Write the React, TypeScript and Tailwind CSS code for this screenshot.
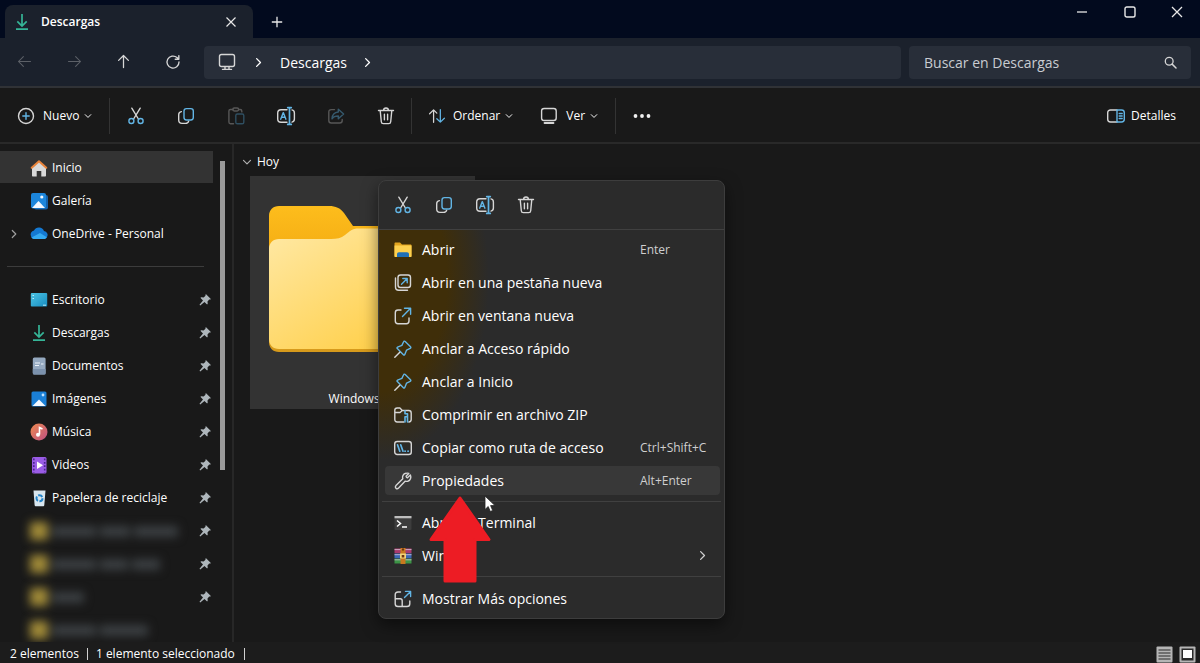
import React from 'react';

type IconProps = { className?: string };

const LIGHT = '#d6d6d6';
const BLUE = '#62b5e5';

/* ---------- line icons ---------- */

function Line({ className = 'size-4', children }: IconProps & { children: React.ReactNode }) {
  return (
    <svg
      viewBox="0 0 20 20"
      className={className}
      fill="none"
      stroke={LIGHT}
      strokeWidth="1.4"
      strokeLinecap="round"
      strokeLinejoin="round"
      aria-hidden="true"
    >
      {children}
    </svg>
  );
}

function CutIcon({ className = 'size-5' }: IconProps) {
  return (
    <Line className={className}>
      <path d="M5.8 2.2 12.4 13M14.2 2.2 7.6 13" />
      <circle cx="5.4" cy="15" r="2.5" stroke={BLUE} />
      <circle cx="14.6" cy="15" r="2.5" stroke={BLUE} />
    </Line>
  );
}

function CopyIcon({ className = 'size-5' }: IconProps) {
  return (
    <Line className={className}>
      <path d="M5.4 5.6C3.6 5.9 2.7 7 2.7 8.7V14c0 2 1.3 3.4 3.3 3.4h3.5c1.8 0 2.800-.8 3.200-2.300" />
      <rect x="8" y="2.6" width="9.3" height="11.4" rx="2.4" stroke={BLUE} />
    </Line>
  );
}

function PasteIcon({ className = 'size-5' }: IconProps) {
  return (
    <Line className={className}>
      <g stroke="#575757">
        <path d="M7 3.5H4.5c-1 0-1.6.6-1.6 1.6v11c0 1 .6 1.6 1.6 1.6h3M13 3.5h1.2c1 0 1.6.6 1.6 1.6v.8" />
        <rect x="6.8" y="2" width="5.800" height="3" rx="1.4" />
      </g>
      <rect x="9.8" y="8" width="8" height="9.8" rx="1.6" stroke="#2f4f61" />
    </Line>
  );
}

function RenameIcon({ className = 'size-5' }: IconProps) {
  return (
    <Line className={className}>
      <path d="M11 3.8H5C3 3.8 1.700 5.100 1.700 7v6c0 2 1.300 3.200 3.300 3.200h6M16 3.900c1.500.3 2.400 1.400 2.400 3.100v6c0 1.700-.9 2.800-2.400 3.100" />
      <path d="M13.500 2v16M11.700 1.600h3.600M11.700 18.400h3.600" stroke={BLUE} strokeWidth="1.7" />
      <path d="m4.700 13.200 2.600-6.600 2.600 6.600M5.600 11.200H9" stroke={BLUE} />
    </Line>
  );
}

function ShareIcon({ className = 'size-5' }: IconProps) {
  return (
    <Line className={className}>
      <path d="M8.500 3.600H5.300c-1.600 0-2.500.9-2.500 2.500v8.400c0 1.600.9 2.500 2.500 2.500h8.400c1.600 0 2.500-.9 2.500-2.500v-1" stroke="#575757" />
      <path d="M12.300 3.200 17.600 8l-5.300 4.800V10c-3.200 0-5 .7-6.300 2.800.2-3.900 2.500-6.500 6.300-6.800z" stroke="#35596d" />
    </Line>
  );
}

function TrashIcon({ className = 'size-5' }: IconProps) {
  return (
    <Line className={className}>
      <path d="M2.500 4.500h15M4.200 4.500l1.100 11.200c.1 1.300.8 1.900 2 1.900h5.400c1.200 0 1.900-.6 2-1.900l1.100-11.200M7.600 4.300C7.600 2.800 8.400 2 10 2s2.400.8 2.400 2.300M8.400 8.300v5.400M11.600 8.300v5.400" />
    </Line>
  );
}

function SortIcon() {
  return (
    <Line className="size-[18px]">
      <path d="M6.200 17V3.200M1.800 7.500l4.400-4.300 3.600 3.600" />
      <path d="M13.700 3v13.800M9.800 13l3.900 3.800 4.500-4.300" stroke={BLUE} />
    </Line>
  );
}

function ViewIcon() {
  return (
    <Line className="size-5">
      <rect x="2.600" y="2.500" width="14.600" height="12" rx="2.500" />
      <path d="M5.500 17h9" strokeWidth="1.800" />
    </Line>
  );
}

function DetailsIcon() {
  return (
    <Line className="size-5">
      <path d="M11 4H4.500C2.800 4 1.700 5 1.700 6.700v6.600c0 1.700 1.100 2.700 2.800 2.700H11" />
      <path d="M11 4h4.500c1.700 0 2.800 1 2.800 2.700v6.600c0 1.700-1.100 2.700-2.800 2.700H11zM13.200 7.500h3M13.200 10h3M13.200 12.500h3" stroke={BLUE} />
    </Line>
  );
}

function PlusCircleIcon() {
  return (
    <Line className="size-5">
      <circle cx="10" cy="10" r="7.500" />
      <path d="M10 6.800v6.400M6.800 10h6.400" stroke={BLUE} />
    </Line>
  );
}

function ChevronIcon({ className = 'size-2' }: IconProps) {
  return (
    <svg viewBox="0 0 10 10" className={className} fill="none" stroke="currentColor" strokeWidth="1.200" strokeLinecap="round" strokeLinejoin="round" aria-hidden="true">
      <path d="m1.500 3.300 3.500 3.500 3.500-3.500" />
    </svg>
  );
}

function MonitorIcon() {
  return (
    <Line className="size-5">
      <rect x="2.500" y="2.500" width="15" height="12" rx="2" />
      <path d="M8 14.600v2.600M12 14.600v2.600M5.500 17.400h9" />
    </Line>
  );
}

function NewTabIcon() {
  return (
    <Line className="size-5">
      <rect x="5" y="2" width="12.500" height="12.500" rx="2.500" />
      <path d="M2.500 5v9c0 2 1.200 3.200 3.200 3.200h8.800" />
      <path d="M8.500 11.200 14 5.800M9.800 5.500h4.400v4.300" stroke={BLUE} />
    </Line>
  );
}

function NewWindowIcon() {
  return (
    <Line className="size-5">
      <path d="M8 4H5C3.300 4 2.300 5 2.300 6.700V15c0 1.700 1 2.700 2.700 2.700h8.300c1.700 0 2.700-1 2.700-2.700v-3" />
      <path d="M9.500 10.500 17.300 2.600M11.500 2.300h6.100v6" stroke={BLUE} />
    </Line>
  );
}

function PinLineIcon() {
  return (
    <Line className="size-5">
      <path d="m12.200 2.500 5.300 5.300c.6.600.4 1.300-.3 1.600l-3.600 1.700-1.800 4.300c-.3.700-.9.800-1.400.3L4.300 9.600c-.5-.5-.4-1.100.3-1.400l4.300-1.800 1.700-3.600c.3-.7 1-.9 1.600-.3z" stroke={BLUE} />
      <path d="m6.800 13.200-5 5" />
    </Line>
  );
}

function ZipIcon() {
  return (
    <Line className="size-5">
      <path d="M11 17H4.200c-1.500 0-2.400-.9-2.400-2.400V5.400C1.800 3.900 2.700 3 4.200 3h2.700l2.400 2.500h6.500c1.500 0 2.400.9 2.400 2.400v6.700c0 1.500-.9 2.400-2.400 2.400M2 7.500h5l2.300-2" />
      <path d="M12 5.800v3h2.500v3H12V17M14.500 11.800V17" stroke={BLUE} strokeWidth="1.600" />
    </Line>
  );
}

function PathIcon() {
  return (
    <Line className="size-5">
      <rect x="1.700" y="3.500" width="16.600" height="13" rx="2.500" />
      <path d="m4.500 6.800 2.300 6.400M7.700 6.800l2.300 6.400M12 13.200h.2M15 13.200h.2" stroke={BLUE} strokeWidth="1.700" />
    </Line>
  );
}

function WrenchIcon() {
  return (
    <Line className="size-5">
      <path d="M12.900 2.300c1-.3 2-.2 2.900.1l-2.600 2.700c-.5.500.9 2 1.500 1.500l2.700-2.600c1 2.300.1 5.500-2.600 6.200-.9.200-1.700.2-2.500-.1l-6.700 7c-1.900 1.800-4.400-.7-2.600-2.600l6.800-6.800c-.9-2.300.5-4.800 3.100-5.400z" />
    </Line>
  );
}

function MoreOptionsIcon() {
  return (
    <Line className="size-5">
      <path d="M7.500 3H5C3.200 3 2.200 4 2.200 5.800v8.900c0 1.800 1 2.800 2.800 2.800h9c1.800 0 2.800-1 2.800-2.800V12M2.400 9.800h4.800c1.200 0 2 .8 2 2v5.500" />
      <path d="m11.500 8.500 5.800-5.800M12.500 2.400h5.100v5.200" stroke={BLUE} />
    </Line>
  );
}

/* ---------- coloured icons ---------- */

function DownloadIcon({ className = 'size-[18px]' }: IconProps) {
  return (
    <svg viewBox="0 0 18 18" className={className} fill="none" stroke="#35b597" strokeWidth="1.700" aria-hidden="true">
      <path d="M9 1v12M4.300 8.300 9 13l4.700-4.700M3 16.200h12" />
    </svg>
  );
}

function HomeIcon() {
  return (
    <svg viewBox="0 0 18 18" className="size-[18px]" aria-hidden="true">
      <path d="M2 8 9 2.500 16 8v8.500c0 .6-.4 1-1 1h-3.700v-5.500H6.700v5.500H3c-.6 0-1-.4-1-1z" fill="#d9d9d9" />
      <path d="M1.700 8.800 9 2.200l7.300 6.600" fill="none" stroke="#e8833a" strokeWidth="2" strokeLinecap="round" strokeLinejoin="round" />
    </svg>
  );
}

function GalleryIcon() {
  return (
    <svg viewBox="0 0 18 18" className="size-[18px]" aria-hidden="true">
      <rect x="4" y="3" width="14" height="14.500" rx="2" fill="#1462ad" />
      <rect x="1" y="1" width="15" height="15.500" rx="2" fill="#1c86dc" />
      <path d="m2 16 6.500-7 6.500 7z" fill="#f2f8ff" />
      <circle cx="11.800" cy="5" r="1.600" fill="#f2f8ff" />
    </svg>
  );
}

function OneDriveIcon() {
  return (
    <svg viewBox="0 0 18 18" className="size-[18px]" aria-hidden="true">
      <path d="M1 11a4 4 0 0 1 3-5.500A5.500 5.500 0 0 1 14 6a4 4 0 0 1 2.600 6.600C16 13.500 15 14 14 14H4.500C2.800 14 1 12.800 1 11z" fill="#1479d2" />
      <path d="M1.500 12.500 10 8l6.800 4.200C16.300 13.400 15.200 14 14 14H4.500c-1.300 0-2.500-.6-3-1.500z" fill="#35aaf2" />
    </svg>
  );
}

function DesktopIcon() {
  return (
    <svg viewBox="0 0 18 18" className="size-[18px]" aria-hidden="true">
      <defs>
        <linearGradient id="desk" x1="0" y1="0" x2="1" y2="1">
          <stop offset="0" stopColor="#4cc4e4" />
          <stop offset="1" stopColor="#178cc0" />
        </linearGradient>
      </defs>
      <rect x=".8" y="2" width="16.400" height="13.500" rx="1" fill="url(#desk)" />
      <path d="M2.500 4.500H4M2.500 7.500H4M13 14.200h3" stroke="#b8ecfa" />
    </svg>
  );
}

function DocumentIcon() {
  return (
    <svg viewBox="0 0 18 18" className="size-[18px]" aria-hidden="true">
      <rect x="2.800" y=".5" width="12.800" height="17" rx="1.500" fill="#95a9c0" />
      <path d="M2.800 12h12.800v4a1.500 1.500 0 0 1-1.500 1.500H4.300A1.500 1.500 0 0 1 2.800 16z" fill="#7b91ac" />
      <path d="M5 6h5M5 8.500h4M11 7h2.500" stroke="#edf3fa" strokeWidth="1.200" />
    </svg>
  );
}

function PictureIcon() {
  return (
    <svg viewBox="0 0 18 18" className="size-[18px]" aria-hidden="true">
      <rect x="1.500" y="1.500" width="15" height="15" rx="1.500" fill="#1a7fd6" />
      <path d="m2.500 16 6.500-6.500 6.500 6.500z" fill="#f2f8ff" />
      <circle cx="13" cy="5" r="1.400" fill="#bfe2ff" />
    </svg>
  );
}

function MusicIcon() {
  return (
    <svg viewBox="0 0 18 18" className="size-[18px]" aria-hidden="true">
      <defs>
        <linearGradient id="music" x1="0" y1="0" x2="1" y2="1">
          <stop offset="0" stopColor="#ee8a50" />
          <stop offset="1" stopColor="#bd4f83" />
        </linearGradient>
      </defs>
      <circle cx="9" cy="9" r="8.500" fill="url(#music)" />
      <path d="M9.500 11.500V4.500l3 1.500" fill="none" stroke="#fff" strokeWidth="1.600" />
      <circle cx="8" cy="11.700" r="2" fill="#fff" />
    </svg>
  );
}

function VideoIcon() {
  return (
    <svg viewBox="0 0 18 18" className="size-[18px]" aria-hidden="true">
      <rect x="2" y="1" width="14.500" height="16.500" rx="1.500" fill="#9a5ce6" />
      <path d="M3.800 2.500v14M14.700 2.500v14" stroke="#4d2493" strokeWidth="1.600" strokeDasharray="1.800 1.600" />
      <path d="m7 5.500 6 3.700-6 3.700z" fill="#fff" />
    </svg>
  );
}

function RecycleIcon() {
  return (
    <svg viewBox="0 0 18 18" className="size-[18px]" aria-hidden="true">
      <path d="M3.500 1.500h12L14.300 16c0 .8-.6 1.300-1.300 1.300H6c-.8 0-1.300-.5-1.400-1.300z" fill="#d8e6ee" />
      <circle cx="9.500" cy="9.200" r="3" fill="none" stroke="#2384c9" strokeWidth="2" strokeDasharray="4.700 1.500" />
    </svg>
  );
}

function PinSolidIcon() {
  return (
    <svg viewBox="0 0 12 12" className="size-3" fill="#aeb6bb" aria-hidden="true">
      <path d="M7.300.4 11.600 4.700c.3.500 0 .9-.5.9l-.9-.1-1.700 1.900.2 2.400c0 .5-.5.7-.9.400L5.500 8 1.200 11.500.5 10.800 4 6.500 1.800 4.200c-.3-.4-.1-.9.400-.9l2.400.2L6.500 1.800l-.1-.9c0-.5.5-.8.9-.5z" />
    </svg>
  );
}

function ExplorerIcon() {
  return (
    <svg viewBox="0 0 20 20" className="size-5" aria-hidden="true">
      <path d="M1.500 3.500c0-.7.4-1 1-1h4.500l2 2h8.500c.7 0 1 .4 1 1V16h-17z" fill="#e3a51f" />
      <path d="M1.500 5.500h17V17h-17z" fill="#fcd04f" />
      <path d="M4 17v-2.800c0-1.200.8-2 2-2h8c1.200 0 2 .8 2 2V17z" fill="#1d6fb8" />
    </svg>
  );
}

function TerminalIcon() {
  return (
    <svg viewBox="0 0 20 20" className="size-5" aria-hidden="true">
      <rect x="1.500" y="3" width="17" height="14" rx="1" fill="#3d3d3d" />
      <path d="M1.500 3h17v2.300h-17z" fill="#bdbdbd" />
      <path d="m4 7.500 3.500 3L4 13.500M9 14h5" fill="none" stroke="#fff" strokeWidth="1.500" />
    </svg>
  );
}

function WinrarIcon() {
  return (
    <svg viewBox="0 0 20 20" className="size-5" aria-hidden="true">
      <path d="M1.500 2.500h17v4.800h-17z" fill="#a83a6e" />
      <path d="M1.500 7.600h17v4.800h-17z" fill="#3a66b5" />
      <path d="M1.500 12.700h17v4.800h-17z" fill="#3c9446" />
      <path d="M1.500 3.600h17M1.500 8.700h17M1.500 13.800h17" stroke="#d7c4d4" strokeWidth=".8" />
      <path d="M7.500 2h5v16h-5z" fill="#c8791f" />
      <path d="M7 7.500h6v5H7z" fill="#f3d478" />
      <path d="M8.700 9h2.600v2.500H8.700zM9 2.500h2v2H9z" fill="#6c3511" />
    </svg>
  );
}

function BigFolder() {
  return (
    <svg viewBox="0 0 187 146" className="w-[187px]" aria-hidden="true">
      <defs>
        <linearGradient id="back" x1="0" y1="0" x2="0" y2="1">
          <stop offset="0" stopColor="#fdbd1c" />
          <stop offset=".4" stopColor="#f2a912" />
          <stop offset="1" stopColor="#d69a1c" />
        </linearGradient>
        <linearGradient id="front" x1="0" y1="0" x2="1" y2="1">
          <stop offset="0" stopColor="#ffe9a6" />
          <stop offset="1" stopColor="#ffc933" />
        </linearGradient>
      </defs>
      <path d="M0 10C0 4 4 0 10 0h50c7 0 11 2 15 7l9 13h93c6 0 10 4 10 10v106c0 6-4 10-10 10H10c-6 0-10-4-10-10z" fill="url(#back)" />
      <path d="M0 43c0-6 4-10 10-10h52c6 0 10-1 14-4l5-4c3-2 5-2.500 9-2.500h87c6 0 10 4 10 10V133c0 6-4 10-10 10H10c-6 0-10-4-10-10z" fill="url(#front)" />
    </svg>
  );
}

/* ---------- sidebar ---------- */

const topLinks = [
  { label: 'Inicio', icon: <HomeIcon />, active: true },
  { label: 'Galería', icon: <GalleryIcon /> },
  { label: 'OneDrive - Personal', icon: <OneDriveIcon />, expandable: true },
];

const pinned = [
  { label: 'Escritorio', icon: <DesktopIcon /> },
  { label: 'Descargas', icon: <DownloadIcon /> },
  { label: 'Documentos', icon: <DocumentIcon /> },
  { label: 'Imágenes', icon: <PictureIcon /> },
  { label: 'Música', icon: <MusicIcon /> },
  { label: 'Videos', icon: <VideoIcon /> },
  { label: 'Papelera de reciclaje', icon: <RecycleIcon /> },
];

// Private folders, shown only as a blurred row
const hiddenFolders = [
  { parts: [44, 30, 44], pin: true },
  { parts: [44, 28, 28], pin: true },
  { parts: [32], pin: true },
  { parts: [44, 48], pin: false },
];

function Sidebar() {
  return (
    <aside className="relative w-[234px] shrink-0 overflow-hidden border-r-2 border-[#272727] pt-[7px]">
      <nav aria-label="Panel de navegación">
        {topLinks.map((item) => (
          <a
            key={item.label}
            href="#"
            className={`mb-px flex h-8 w-[213px] items-center pt-[2px] text-[12px] ${item.active ? 'bg-[#333333]' : ''}`}
          >
            <span className="flex w-[30px] shrink-0 pl-[9px] text-[#9a9a9a]">
              {item.expandable && <ChevronIcon className="size-[10px] -rotate-90" />}
            </span>
            {item.icon}
            <span className="pl-1">{item.label}</span>
          </a>
        ))}
        <hr className="mt-[17px] mr-7 mb-4 ml-[7px] border-[#3c3c3c]" />
        {pinned.map((item) => (
          <a key={item.label} href="#" className="mb-px flex h-8 w-[213px] items-center pt-[2px] pr-[2px] pl-[30px] text-[12px]">
            {item.icon}
            <span className="flex-1 pl-1">{item.label}</span>
            <PinSolidIcon />
          </a>
        ))}
        {hiddenFolders.map((folder, i) => (
          <a key={i} href="#" aria-label="Carpeta privada" className="mb-px flex h-8 w-[213px] items-center pt-[2px] pr-[2px] pl-[30px]">
            <span className="flex flex-1 items-center gap-1 blur-[5px]">
              <span className="size-[18px] bg-[#a08a38]" />
              {folder.parts.map((width, n) => (
                <span key={n} className="h-[11px] bg-[#3c4043]" style={{ width }} />
              ))}
            </span>
            {folder.pin && <PinSolidIcon />}
          </a>
        ))}
      </nav>
      <div className="absolute top-[17px] right-[7px] h-[309px] w-[5px] bg-[#9a9a9a]" />
    </aside>
  );
}

/* ---------- context menu ---------- */

type MenuEntry = {
  label: string;
  icon: React.ReactNode;
  shortcut?: string;
  active?: boolean;
  submenu?: boolean;
};

const mainEntries: MenuEntry[] = [
  { label: 'Abrir', icon: <ExplorerIcon />, shortcut: 'Enter' },
  { label: 'Abrir en una pestaña nueva', icon: <NewTabIcon /> },
  { label: 'Abrir en ventana nueva', icon: <NewWindowIcon /> },
  { label: 'Anclar a Acceso rápido', icon: <PinLineIcon /> },
  { label: 'Anclar a Inicio', icon: <PinLineIcon /> },
  { label: 'Comprimir en archivo ZIP', icon: <ZipIcon /> },
  { label: 'Copiar como ruta de acceso', icon: <PathIcon />, shortcut: 'Ctrl+Shift+C' },
  { label: 'Propiedades', icon: <WrenchIcon />, shortcut: 'Alt+Enter', active: true },
];

const appEntries: MenuEntry[] = [
  { label: 'Abrir en Terminal', icon: <TerminalIcon /> },
  { label: 'WinRAR', icon: <WinrarIcon />, submenu: true },
];

const quickActions = [
  { label: 'Cortar', icon: <CutIcon /> },
  { label: 'Copiar', icon: <CopyIcon /> },
  { label: 'Cambiar nombre', icon: <RenameIcon /> },
  { label: 'Eliminar', icon: <TrashIcon /> },
];

function MenuItem({ entry }: { entry: MenuEntry }) {
  return (
    <li>
      <button
        role="menuitem"
        className={`flex h-[29px] w-full items-center rounded pl-2 text-left text-[14px] ${entry.active ? 'bg-[#383838]' : ''}`}
      >
        {entry.icon}
        <span className="flex-1 pl-[9px]">{entry.label}</span>
        {entry.shortcut && <span className="w-20 text-[12px] text-[#cfcfcf]">{entry.shortcut}</span>}
        {entry.submenu && <ChevronIcon className="mr-3 size-[11px] -rotate-90 text-[#cfcfcf]" />}
      </button>
    </li>
  );
}

function ContextMenu() {
  return (
    <div
      role="menu"
      className="absolute top-9 left-36 w-[347px] rounded-lg border border-[#3d3d3d] bg-[#2b2b2b] shadow-[0_6px_16px_rgba(0,0,0,0.5)]"
    >
      <div className="flex h-12 items-center gap-[21px] pl-[14px]">
        {quickActions.map((action) => (
          <button key={action.label} aria-label={action.label} title={action.label}>
            {action.icon}
          </button>
        ))}
      </div>
      <ul className="flex flex-col gap-1 border-t border-[#404040] bg-[radial-gradient(ellipse_110px_180px_at_0px_50px,#3f2e09_62%,transparent)] pt-[5px] pr-1 pb-[6px] pl-[6px]">
        {mainEntries.map((entry) => (
          <MenuItem key={entry.label} entry={entry} />
        ))}
      </ul>
      <ul className="mx-[3px] flex flex-col gap-1 border-t border-[#404040] py-[6px] pr-px pl-[3px]">
        {appEntries.map((entry) => (
          <MenuItem key={entry.label} entry={entry} />
        ))}
      </ul>
      <ul className="mx-[3px] border-t border-[#404040] pt-[7px] pr-px pb-[5px] pl-[3px]">
        <MenuItem entry={{ label: 'Mostrar Más opciones', icon: <MoreOptionsIcon /> }} />
      </ul>

      {/* Arrow and pointer over Propiedades */}
      <svg viewBox="0 0 62 87" className="pointer-events-none absolute top-[315px] left-[50px] w-[62px]" aria-hidden="true">
        <path
          d="M31 2 60 43.500H46V85H16V43.500H2z"
          fill="#ed1c24"
          stroke="#ed1c24"
          strokeWidth="3"
          strokeLinejoin="round"
        />
      </svg>
      <svg viewBox="0 0 12 18" className="pointer-events-none absolute top-[314px] left-[105px] w-3" aria-hidden="true">
        <path d="M1 1v13.500l3.200-3 2.100 5 2.400-1-2.100-4.900H11z" fill="#fff" stroke="#222" strokeWidth=".8" />
      </svg>
    </div>
  );
}

/* ---------- window ---------- */

const toolActions = [
  { label: 'Cortar', icon: <CutIcon /> },
  { label: 'Copiar', icon: <CopyIcon /> },
  { label: 'Pegar', icon: <PasteIcon />, disabled: true },
  { label: 'Cambiar nombre', icon: <RenameIcon /> },
  { label: 'Compartir', icon: <ShareIcon />, disabled: true },
  { label: 'Eliminar', icon: <TrashIcon /> },
];

function TitleBar() {
  return (
    <header className="flex h-[38px] shrink-0 bg-[#020a1e] pl-[5px]">
      <div className="mt-[5px] flex w-[248px] items-center rounded-t-lg bg-[#1b212c] pr-4 pl-2">
        <DownloadIcon />
        <span className="flex-1 pl-[10px] text-[12px] font-semibold">Descargas</span>
        <button aria-label="Cerrar pestaña">
          <svg viewBox="0 0 12 12" className="size-3" stroke="#e8e8e8" strokeWidth="1.200" aria-hidden="true">
            <path d="m1.500 1.500 9 9M10.500 1.500l-9 9" />
          </svg>
        </button>
      </div>
      <button aria-label="Nueva pestaña" className="mt-[5px] px-[18px]">
        <svg viewBox="0 0 12 12" className="size-3" stroke="#e8e8e8" strokeWidth="1.300" aria-hidden="true">
          <path d="M6 .8v10.400M.8 6h10.400" />
        </svg>
      </button>
      <div className="ml-auto flex h-6 items-center">
        <button aria-label="Minimizar" className="flex w-12 justify-center">
          <svg viewBox="0 0 12 12" className="size-3" stroke="#e8e8e8" strokeWidth="1.300" aria-hidden="true">
            <path d="M1 6h10" />
          </svg>
        </button>
        <button aria-label="Maximizar" className="flex w-12 justify-center">
          <svg viewBox="0 0 12 12" className="size-3" fill="none" stroke="#e8e8e8" strokeWidth="1.400" aria-hidden="true">
            <rect x="1" y="1" width="10" height="10" rx="1.800" />
          </svg>
        </button>
        <button aria-label="Cerrar" className="flex w-[46px] justify-center">
          <svg viewBox="0 0 12 12" className="size-3" stroke="#e8e8e8" strokeWidth="1.300" aria-hidden="true">
            <path d="m1 1 10 10M11 1 1 11" />
          </svg>
        </button>
      </div>
    </header>
  );
}

function AddressRow() {
  return (
    <div className="flex h-[50px] shrink-0 items-center border-b-2 border-[#303236] bg-[#1b212c] pr-[9px]">
      <div className="flex w-[204px] shrink-0">
        <button aria-label="Atrás" disabled className="flex w-[49px] justify-center opacity-35">
          <Line className="size-[15px]">
            <path d="M18 10H2M8.500 3.500 2 10l6.500 6.500" />
          </Line>
        </button>
        <button aria-label="Adelante" disabled className="flex w-[50px] justify-center opacity-35">
          <Line className="size-[15px]">
            <path d="M2 10h16M11.500 3.500 18 10l-6.500 6.500" />
          </Line>
        </button>
        <button aria-label="Subir" className="flex w-[49px] justify-center">
          <Line className="size-[15px]">
            <path d="M10 18V2M3.500 8.500 10 2l6.500 6.500" strokeWidth="1.700" />
          </Line>
        </button>
        <button aria-label="Actualizar" className="flex w-[50px] justify-center">
          <Line>
            <path d="M17.500 10A7.500 7.500 0 1 1 15 4.500L17 6.300M17.300 2v4.500h-4.500" strokeWidth="1.700" />
          </Line>
        </button>
      </div>
      <nav aria-label="Ruta" className="mr-2 flex h-[33px] flex-1 items-center rounded bg-[#282e39] pl-[13px]">
        <a href="#" aria-label="Este equipo">
          <MonitorIcon />
        </a>
        <ChevronIcon className="mx-4 size-[11px] -rotate-90" />
        <a href="#" className="mr-[15px] text-[14px]">
          Descargas
        </a>
        <ChevronIcon className="size-[11px] -rotate-90" />
      </nav>
      <label className="flex h-[33px] w-[282px] items-center rounded bg-[#282e39] pr-[14px] pl-[15px]">
        <input
          type="search"
          aria-label="Buscar en Descargas"
          placeholder="Buscar en Descargas"
          className="min-w-0 flex-1 bg-transparent text-[14px] outline-none placeholder:text-[#c9ccd2]"
        />
        <Line className="size-[13px]">
          <circle cx="8" cy="8" r="6" strokeWidth="2" />
          <path d="m12.500 12.500 6 6" strokeWidth="2.200" />
        </Line>
      </label>
    </div>
  );
}

function Toolbar() {
  return (
    <div className="flex h-14 shrink-0 items-center border-b-2 border-[#292929] pt-[2px] text-[12px]">
      <button className="flex w-[109px] items-center pl-4">
        <PlusCircleIcon />
        <span className="pr-[5px] pl-[7px]">Nuevo</span>
        <ChevronIcon />
      </button>
      <span className="mr-px h-9 w-px bg-[#333333]" />
      {toolActions.map((action) => (
        <button
          key={action.label}
          aria-label={action.label}
          title={action.label}
          disabled={action.disabled}
          className="flex w-[50px] justify-center"
        >
          {action.icon}
        </button>
      ))}
      <span className="h-9 w-px bg-[#333333]" />
      <button className="ml-4 flex items-center">
        <SortIcon />
        <span className="pr-[5px] pl-[7px]">Ordenar</span>
        <ChevronIcon />
      </button>
      <button className="ml-[26px] flex items-center">
        <ViewIcon />
        <span className="pr-[5px] pl-[7px]">Ver</span>
        <ChevronIcon />
      </button>
      <span className="ml-[17px] h-9 w-px bg-[#333333]" />
      <button aria-label="Más" className="ml-4">
        <svg viewBox="0 0 20 20" className="size-5" fill="#f0f0f0" aria-hidden="true">
          <circle cx="3.500" cy="10" r="1.900" />
          <circle cx="10" cy="10" r="1.900" />
          <circle cx="16.500" cy="10" r="1.900" />
        </svg>
      </button>
      <button className="mr-6 ml-auto flex items-center gap-[5px]">
        <DetailsIcon />
        Detalles
      </button>
    </div>
  );
}

export default function App() {
  return (
    <div className="flex h-screen flex-col overflow-hidden bg-[#191919] font-['Open_Sans','Noto_Sans',sans-serif] text-white">
      <TitleBar />
      <AddressRow />
      <Toolbar />

      <div className="flex min-h-0 flex-1">
        <Sidebar />
        <main className="relative min-w-0 flex-1 px-4 pt-[7px]">
          <button className="-ml-2 flex h-[22px] items-center gap-[5px] text-[12px]">
            <ChevronIcon className="size-[10px] text-[#b0b0b0]" />
            Hoy
          </button>
          <figure className="mt-[3px] flex h-[233px] w-[225px] flex-col items-center bg-[#333333] pt-[30px]">
            <BigFolder />
            <figcaption className="mt-auto pb-px text-[12px]">Windows 11</figcaption>
          </figure>
          <ContextMenu />
        </main>
      </div>

      <footer className="flex h-[21px] shrink-0 items-center bg-[#1c1c1c] pt-[3px] pr-1 pl-[10px] text-[12px]">
        <span>2 elementos</span>
        <span className="mx-2 h-3 w-px bg-[#d0d0d0]" />
        <span>1 elemento seleccionado</span>
        <span className="mx-[9px] h-3 w-px bg-[#d0d0d0]" />
        <div className="ml-auto flex gap-[6px]">
          <button aria-label="Vista de detalles">
            <svg viewBox="0 0 17 17" className="size-[17px]" aria-hidden="true">
              <rect x=".5" y=".5" width="16" height="16" rx="1" fill="#b5b5b5" />
              <path d="M2.500 4h12M2.500 7h12M2.500 10h12M2.500 13h12" stroke="#2a2a2a" strokeWidth="1.200" />
            </svg>
          </button>
          <button aria-label="Vista de iconos grandes">
            <svg viewBox="0 0 17 17" className="size-[17px]" aria-hidden="true">
              <rect x=".5" y=".5" width="16" height="16" rx="1" fill="#b5b5b5" />
              <rect x="2.500" y="2.500" width="12" height="12" fill="#2a2a2a" />
              <rect x="4" y="4" width="9" height="8" fill="#fff" />
            </svg>
          </button>
        </div>
      </footer>
    </div>
  );
}
